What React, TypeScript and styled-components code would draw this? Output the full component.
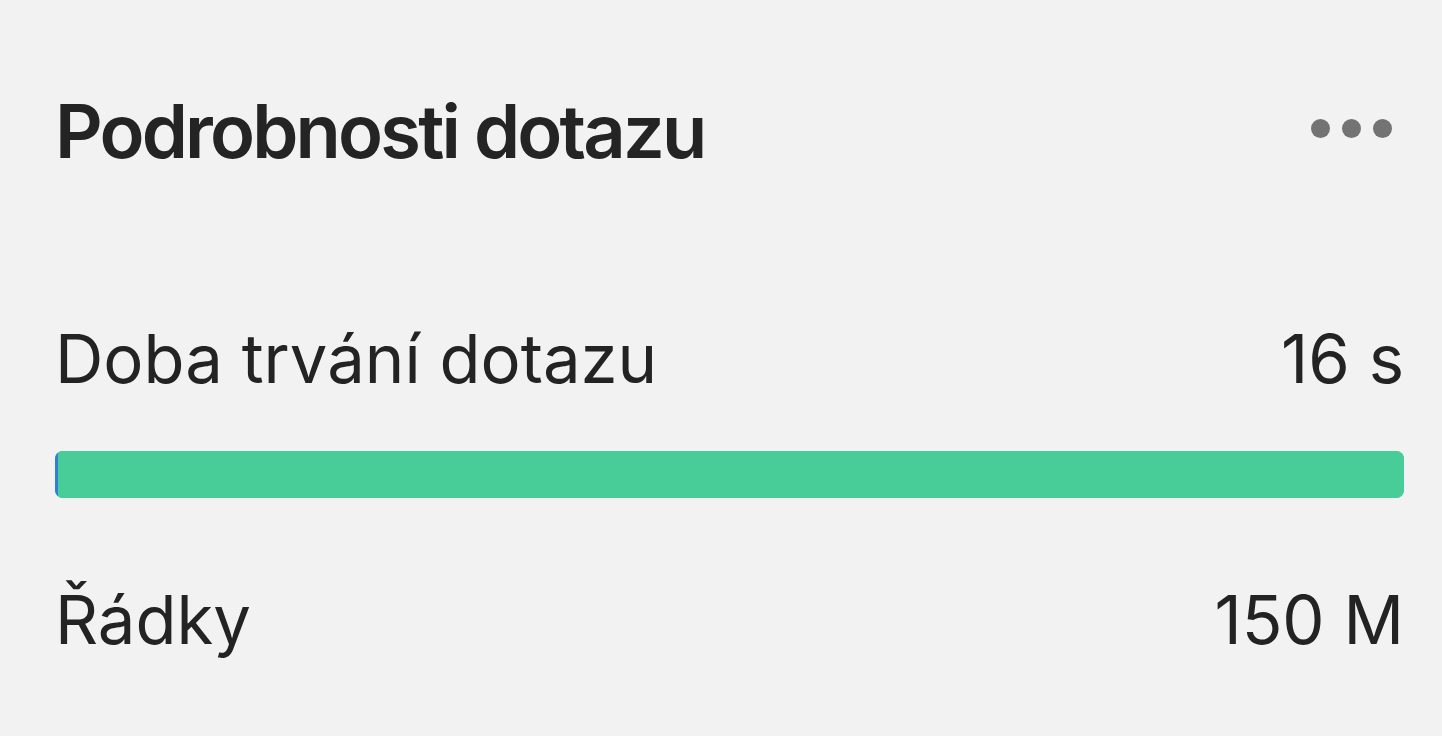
import React from "react";
import styled, { createGlobalStyle } from "styled-components";

const GlobalStyle = createGlobalStyle`
  html, body {
    margin: 0;
    padding: 0;
    background: #f2f2f2;
  }
  body {
    font-family: Inter, "Noto Sans", "Liberation Sans", sans-serif;
    color: #222222;
    -webkit-font-smoothing: antialiased;
  }
`;

interface Segment {
  value: number;
  color: string;
}

interface Metric {
  label: string;
  value: string;
  segments?: Segment[];
}

const metrics: Metric[] = [
  {
    label: "Doba trvání dotazu",
    value: "16 s",
    segments: [
      { value: 0.2, color: "#2f7fd6" },
      { value: 99.8, color: "#48cc98" },
    ],
  },
  { label: "Řádky", value: "150 M" },
];

// Styling with styled components
const Panel = styled.section`
  width: 1442px;
  height: 736px;
  box-sizing: border-box;
  padding: 94px 38px 0 55px;
  display: flex;
  flex-direction: column;
  gap: 157px;
  overflow: hidden;
`;

const Header = styled.header`
  display: flex;
  justify-content: space-between;
  align-items: center;
`;

const Title = styled.h1`
  margin: 0;
  font-size: 74px;
  line-height: 1;
  font-weight: 600;
  letter-spacing: -2.8px;
  color: #242424;
`;

const MoreButton = styled.button`
  display: flex;
  gap: 12px;
  padding: 0;
  margin: 0 12px 6px 0;
  border: none;
  background: none;
  cursor: pointer;
`;

const Dot = styled.span`
  width: 19px;
  height: 19px;
  border-radius: 50%;
  background: #737373;
`;

const MetricList = styled.div`
  display: flex;
  flex-direction: column;
  gap: 88px;
`;

const MetricBlock = styled.div`
  display: flex;
  flex-direction: column;
  gap: 59px;
`;

const MetricRow = styled.div`
  display: flex;
  justify-content: space-between;
  align-items: baseline;
  font-size: 67px;
  line-height: 1;
  font-weight: 400;
  color: #232323;
`;

const Label = styled.span``;

const Value = styled.span``;

const Bar = styled.div`
  display: flex;
  height: 47px;
  border-radius: 8px;
  overflow: hidden;
  background: #48cc98;
`;

const BarSegment = styled.div<{ $color: string }>`
  height: 100%;
  min-width: 3px;
  background: ${({ $color }) => $color};
`;

const App: React.FC = () => {
  return (
    <>
      <GlobalStyle />
      <Panel>
        <Header>
          <Title>Podrobnosti dotazu</Title>
          <MoreButton aria-label="Další možnosti">
            <Dot />
            <Dot />
            <Dot />
          </MoreButton>
        </Header>
        <MetricList>
          {metrics.map((m) => (
            <MetricBlock key={m.label}>
              <MetricRow>
                <Label>{m.label}</Label>
                <Value>{m.value}</Value>
              </MetricRow>
              {m.segments && (
                <Bar>
                  {m.segments.map((s, i) => (
                    <BarSegment key={i} $color={s.color} style={{ flexGrow: s.value }} />
                  ))}
                </Bar>
              )}
            </MetricBlock>
          ))}
        </MetricList>
      </Panel>
    </>
  );
};

export default App;
